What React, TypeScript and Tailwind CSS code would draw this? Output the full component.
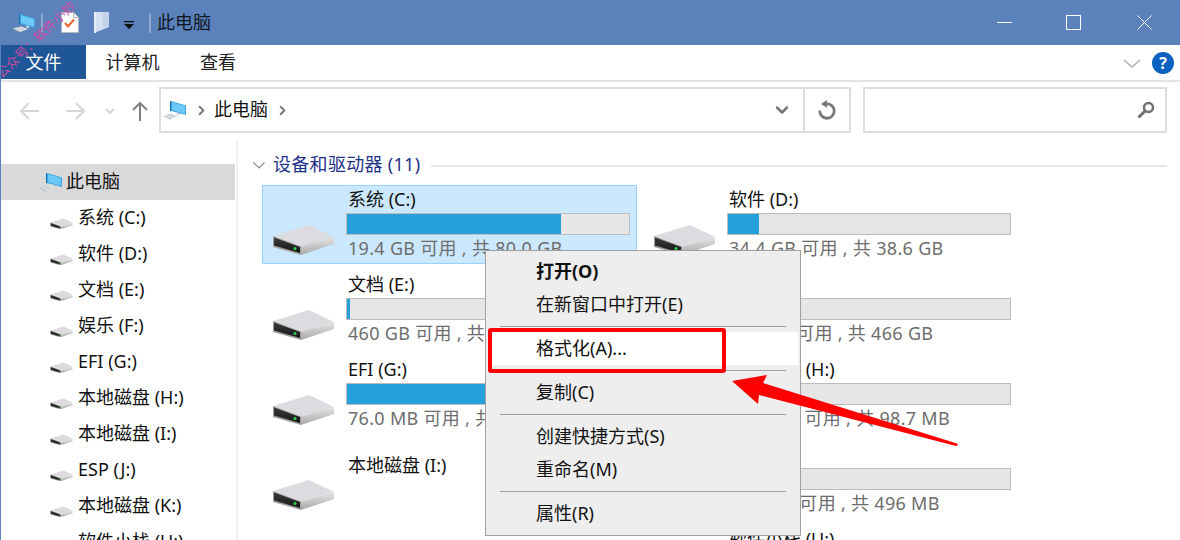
import { ChevronDown, ChevronRight } from "lucide-react";

const font = "font-['Noto_Sans','Noto_Sans_CJK_SC',sans-serif]";

type Drive = {
  name: string;
  info?: string;
  fill?: number;
  selected?: boolean;
};

const sideItems = [
  "系统 (C:)",
  "软件 (D:)",
  "文档 (E:)",
  "娱乐 (F:)",
  "EFI (G:)",
  "本地磁盘 (H:)",
  "本地磁盘 (I:)",
  "ESP (J:)",
  "本地磁盘 (K:)",
  "软件小栈 (U:)",
];

const drives: Drive[] = [
  { name: "系统 (C:)", info: "19.4 GB 可用 , 共 80.0 GB", fill: 76, selected: true },
  { name: "软件 (D:)", info: "34.4 GB 可用 , 共 38.6 GB", fill: 11 },
  { name: "文档 (E:)", info: "460 GB 可用 , 共 465 GB", fill: 1 },
  { name: "娱乐 (F:)", info: "400 GB 可用 , 共 466 GB", fill: 14 },
  { name: "EFI (G:)", info: "76.0 MB 可用 , 共 260 MB", fill: 71 },
  { name: "本地磁盘 (H:)", info: "98.0 MB 可用 , 共 98.7 MB", fill: 1 },
  { name: "本地磁盘 (I:)" },
  { name: "ESP (J:)", info: "413 MB 可用 , 共 496 MB", fill: 17 },
  { name: "本地磁盘 (K:)" },
  { name: "软件小栈 (U:)", info: "1.00 TB 可用 , 共 1.81 TB", fill: 45 },
];

function PcIcon({ className }: { className: string }) {
  return (
    <svg viewBox="0 0 24 20" className={className}>
      <path d="M8 1 23 5.500v9.500L8 11z" fill="#3aa6e8" />
      <path d="M9 2.200 22 6.100v7.700L9 10z" fill="#6cc8f7" />
      <path d="M8 1 7 1.400v10L8 11z" fill="#1a6fa8" />
      <path d="m14 12.500 3 .8v2l-3-.8z" fill="#c6ced6" />
      <path d="M1 15.500 9 13.500l7 2.500-8 3z" fill="#e4e8ec" />
      <path d="M1 15.500 8 19v.8L1 16.300z" fill="#9aa4ac" />
      <path d="m3.500 15.300 5-1.200M5.500 16.400l5-1.300M7.500 17.400l5-1.400" stroke="#a8b2ba" strokeWidth="0.6" />
    </svg>
  );
}

function DriveIcon({ className, id }: { className: string; id: string }) {
  return (
    <svg viewBox="0 0 63 34" className={className}>
      <defs>
        <linearGradient id={id + "s"} x1="0" y1="0" x2="0" y2="1">
          <stop offset="0" stopColor="#e4e4e6" />
          <stop offset="1" stopColor="#a9a9a9" />
        </linearGradient>
        <linearGradient id={id + "f"} x1="0" y1="0" x2="0" y2="1">
          <stop offset="0" stopColor="#3b3b3b" />
          <stop offset="1" stopColor="#161616" />
        </linearGradient>
      </defs>
      <path d="M1 14 37 3l25 12-33 9.500z" fill="#dcdce0" />
      <path d="M29 24.500 62 15v7L29 33z" fill={`url(#${id}s)`} />
      <path d="M1 14 29 24.500V33L1 25z" fill="#9d9d9d" />
      <path d="M2 15.500 28 25v6L2 23.500z" fill={`url(#${id}f)`} />
      <circle cx="23" cy="26.500" r="1.500" fill="#25d94a" />
    </svg>
  );
}

function DriveTile({ drive, index }: { drive: Drive; index: number }) {
  return (
    <div
      className={`relative flex h-[79px] w-[375px] border pl-[83px] ${
        drive.selected ? "border-[#99d1ff] bg-[#cce8ff]" : "border-transparent"
      }`}
    >
      <DriveIcon id={"tile" + index} className="absolute left-[9px] top-[36px] h-[34px] w-[63px]" />
      {drive.info ? (
        <div className="w-[284px]">
          <div className="pl-[2px] text-[18px] leading-[26px] text-[#111]">{drive.name}</div>
          <div className="mt-[1px] h-[22px] w-[284px] border border-[#bcbcbc] bg-[#e6e6e6]">
            <div className="h-full bg-[#26a0da]" style={{ width: `${drive.fill}%` }} />
          </div>
          <div className="whitespace-nowrap pl-[2px] text-[18px] leading-[26px] tracking-[0.3px] text-[#6d6d6d]">
            {drive.info}
          </div>
        </div>
      ) : (
        <div className="pl-[2px] pt-[11px] text-[18px] leading-[26px] text-[#111]">{drive.name}</div>
      )}
    </div>
  );
}

function MenuItem({ label, bold, active }: { label: string; bold?: boolean; active?: boolean }) {
  return (
    <div
      className={`mx-[2px] flex h-[33px] items-center pl-[48px] text-[18px] text-[#111] ${
        active ? "bg-white" : ""
      } ${bold ? "font-bold" : ""}`}
    >
      {label}
    </div>
  );
}

function MenuSep() {
  return (
    <div className="flex h-[11px] items-center px-[14px]">
      <div className="h-px w-full bg-[#a0a0a0]" />
    </div>
  );
}

export default function App() {
  return (
    <div className={`relative h-[540px] w-[1180px] overflow-hidden border-l border-[#5b82bb] bg-white ${font}`}>
      {/* title bar */}
      <div className="flex h-[45px] items-center bg-[#5b82bb] pl-[11px]">
        <PcIcon className="h-[20px] w-[24px]" />
        <div className="ml-[5px] h-[20px] w-[2px] bg-[#8fa9cf]" />
        <svg viewBox="0 0 18 21" className="ml-[18px] h-[21px] w-[18px]">
          <path d="M.5.5h12l5 5v15H.5z" fill="#fff" stroke="#b4b8be" />
          <path d="M12.500.5v5h5" fill="#f0f0f0" stroke="#b4b8be" />
          <path d="m4 11 3 3.500 6-7" fill="none" stroke="#e8622a" strokeWidth="2" />
        </svg>
        <svg viewBox="0 0 15 21" className="ml-[15px] h-[21px] w-[15px]">
          <path d="M0 0h15v15L0 21z" fill="#d4e0f0" />
          <path d="M9 0h6v15H9z" fill="#c2d2e8" />
          <path d="M0 0h2v21H0z" fill="#e6edf6" />
        </svg>
        <svg viewBox="0 0 10 8" className="ml-[15px] mt-[4px] h-[8px] w-[10px]">
          <path d="M0 0h10v1.200H0zM0 3h10L5 8z" fill="#111" />
        </svg>
        <div className="ml-[15px] h-[20px] w-[2px] bg-[#8fa9cf]" />
        <span className="ml-[6px] text-[18px] text-[#10151f]">此电脑</span>
        <div className="ml-auto flex items-center pr-[28px]">
          <div className="h-px w-[15px] bg-white" />
          <div className="ml-[54px] h-[15px] w-[15px] border border-white" />
          <svg viewBox="0 0 15 15" className="ml-[56px] h-[15px] w-[15px]">
            <path d="m.5.5 14 14M14.500.5l-14 14" stroke="#fff" strokeWidth="1" />
          </svg>
        </div>
      </div>

      {/* ribbon tabs */}
      <div className="flex h-[37px] items-start border-b-2 border-[#e3e3e3]">
        <div className="flex h-[34px] w-[85px] items-center justify-center bg-[#1f5697] text-[18px] text-white">文件</div>
        <div className="flex h-[34px] w-[93px] items-center justify-center text-[18px] text-[#222]">计算机</div>
        <div className="flex h-[34px] w-[78px] items-center justify-center text-[18px] text-[#222]">查看</div>
        <div className="ml-auto flex h-[34px] items-center gap-[11px] pr-[6px] pt-[2px]">
          <svg viewBox="0 0 18 9" className="h-[9px] w-[18px]">
            <path d="m1 1 8 7 8-7" fill="none" stroke="#b0b0b0" strokeWidth="1.500" />
          </svg>
          <div className="flex h-[22px] w-[22px] items-center justify-center rounded-full bg-[#0a62c0] text-[16px] font-bold text-white">?</div>
        </div>
      </div>

      {/* nav row */}
      <div className="flex h-[58px] items-start pt-[5px]">
        <svg viewBox="0 0 150 22" className="mt-[13px] h-[22px] w-[150px] shrink-0">
          <path d="M38 11H20m8-8-8 8 8 8" fill="none" stroke="#d6d6d6" strokeWidth="2" />
          <path d="M65 11h18m-8-8 8 8-8 8" fill="none" stroke="#d6d6d6" strokeWidth="2" />
          <path d="m105 9 4 4 4-4" fill="none" stroke="#d6d6d6" strokeWidth="2" />
          <path d="M139 21V3m-7 7 7-7 7 7" fill="none" stroke="#808080" strokeWidth="2" />
        </svg>
        <div className="ml-[8px] flex h-[46px] w-[692px] items-center border-2 border-[#dcdcdc]">
          <PcIcon className="ml-[2px] h-[20px] w-[24px]" />
          <ChevronRight className="ml-[7px] h-[15px] w-[15px] text-[#777]" strokeWidth={3} />
          <span className="ml-[5px] pb-[2px] text-[18px] text-[#111]">此电脑</span>
          <ChevronRight className="ml-[7px] h-[15px] w-[15px] text-[#777]" strokeWidth={3} />
          <ChevronDown className="ml-auto h-[20px] w-[20px] text-[#777]" strokeWidth={3} />
          <div className="ml-[11px] h-full w-[2px] bg-[#dcdcdc]" />
          <svg viewBox="0 0 18 18" className="mx-[12px] h-[20px] w-[20px]">
            <path d="M2.500 9.500A6.500 6.500 0 1 0 8 3.500" fill="none" stroke="#777" strokeWidth="2.500" />
            <path d="M9 0v7L3.500 3.500z" fill="#777" />
          </svg>
        </div>
        <div className="ml-[12px] flex h-[46px] w-[304px] items-center justify-end border-2 border-[#dcdcdc] pr-[10px]">
          <svg viewBox="0 0 18 18" className="h-[18px] w-[18px]">
            <circle cx="11.500" cy="6.500" r="4.500" fill="none" stroke="#707070" strokeWidth="2.500" />
            <path d="m8 10-6.500 6.500" stroke="#707070" strokeWidth="3" />
          </svg>
        </div>
      </div>

      {/* body */}
      <div className="flex h-[400px]">
        <div className="h-[600px] w-[237px] shrink-0 border-r-2 border-[#f0f0f0] pt-[24px]">
          <div className="mr-[1px] flex h-[36px] items-center bg-[#d9d9d9] pl-[38px]">
            <PcIcon className="h-[20px] w-[24px]" />
            <span className="ml-[3px] pb-[2px] text-[18px] text-[#111]">此电脑</span>
          </div>
          {sideItems.map((item, i) => (
            <div key={item} className="flex h-[36px] items-center pl-[49px]">
              <DriveIcon id={"side" + i} className="mt-[10px] h-[13px] w-[23px]" />
              <span className="ml-[5px] whitespace-nowrap pb-[2px] text-[18px] text-[#111]">{item}</span>
            </div>
          ))}
        </div>

        <div className="min-w-0 flex-1 pl-[15px] pt-[11px]">
          <div className="flex h-[28px] items-center">
            <svg viewBox="0 0 12 7" className="h-[7px] w-[12px]">
              <path d="m.5.5 5.500 5.500L11.500.5" fill="none" stroke="#8a8a8a" strokeWidth="1.200" />
            </svg>
            <span className="ml-[8px] pb-[2px] text-[18px] tracking-[0.3px] text-[#1e3287]">设备和驱动器 (11)</span>
            <div className="ml-[11px] h-[2px] w-[736px] translate-y-[1px] bg-[#e8e8e8]" />
          </div>
          <div className="ml-[9px] mt-[6px] grid grid-cols-[381px_381px] auto-rows-[85px]">
            {drives.map((d, i) => (
              <DriveTile key={d.name} drive={d} index={i} />
            ))}
          </div>
        </div>
      </div>

      {/* context menu */}
      <div className="absolute left-[484px] top-[250px] h-[286px] w-[316px] border border-[#a0a0a0] bg-[#eeeeee] pt-[4px]">
        <MenuItem label="打开(O)" bold />
        <MenuItem label="在新窗口中打开(E)" />
        <MenuSep />
        <MenuItem label="格式化(A)..." active />
        <MenuSep />
        <MenuItem label="复制(C)" />
        <MenuSep />
        <MenuItem label="创建快捷方式(S)" />
        <MenuItem label="重命名(M)" />
        <MenuSep />
        <MenuItem label="属性(R)" />
      </div>

      {/* red annotation */}
      <div className="absolute left-[487px] top-[328px] h-[45px] w-[238px] rounded-[3px] border-[4px] border-[#ff0000]" />
      <svg viewBox="0 0 1180 540" className="pointer-events-none absolute left-[-1px] top-0 h-[540px] w-[1180px]">
        <path d="M732 381 767 375 763 383 957 443.500Q959 445.500 956 446L759 395 758 404z" fill="#ff0000" />
      </svg>

      {/* watermark */}
      <span className="absolute left-[-17px] top-[30px] -rotate-[44deg] whitespace-nowrap text-[13px] text-[#cf4aa6]">
        公众号：软件小妙
      </span>
    </div>
  );
}
